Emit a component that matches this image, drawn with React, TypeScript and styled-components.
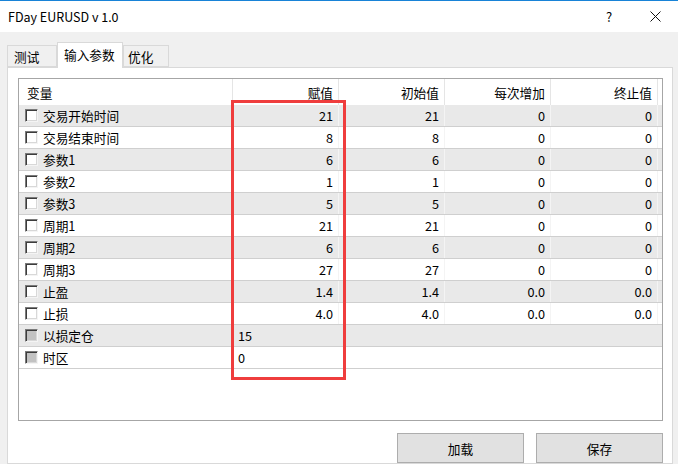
import React from "react";
import styled, { createGlobalStyle } from "styled-components";

const Global = createGlobalStyle`
  html, body { margin: 0; padding: 0; background: #f0f0f0; }
  body { font-family: "Noto Sans CJK SC", "Noto Sans", sans-serif; }
  * { box-sizing: border-box; }
`;

const Window = styled.div`
  width: 678px;
  height: 464px;
  overflow: hidden;
  background: #f0f0f0;
  display: flex;
  flex-direction: column;
  font-size: 12.7px;
  color: #000;
`;

const TitleBar = styled.div`
  height: 32px;
  flex: none;
  background: #fff;
  border-top: 1px solid #1883d7;
  display: flex;
  align-items: center;
  padding-left: 8px;
`;

const Title = styled.div`
  flex: 1;
  font-size: 12.5px;
`;

const TitleBtn = styled.div`
  width: 46px;
  height: 31px;
  display: flex;
  align-items: center;
  justify-content: center;
  font-size: 13px;
`;

const Body = styled.div`
  flex: 1;
  display: flex;
  flex-direction: column;
  padding: 10px 5px 0 7px;
`;

const TabStrip = styled.div`
  height: 25px;
  flex: none;
  display: flex;
  align-items: flex-end;
`;

const Tab = styled.div<{ $w: number; $pl: number; $active?: boolean }>`
  width: ${(p) => p.$w}px;
  height: ${(p) => (p.$active ? 26 : 22)}px;
  margin-bottom: ${(p) => (p.$active ? -1 : 0)}px;
  padding-left: ${(p) => p.$pl}px;
  padding-bottom: ${(p) => (p.$active ? 2 : 0)}px;
  background: ${(p) => (p.$active ? "#fff" : "#f0f0f0")};
  border: 1px solid #d9d9d9;
  border-bottom: ${(p) => (p.$active ? "none" : "1px solid #d9d9d9")};
  display: flex;
  align-items: center;
  position: relative;
  z-index: ${(p) => (p.$active ? 1 : 0)};
`;

const Panel = styled.div`
  flex: 1;
  background: #fff;
  border: 1px solid #d9d9d9;
  padding: 10px 9px 0 10px;
  display: flex;
  flex-direction: column;
`;

const List = styled.div`
  height: 343px;
  border: 1px solid #a6a6a6;
  background: #fff;
  position: relative;
  flex: none;
`;

const cols = "214px 106px 106px 106px 107px 1fr";

const HeaderRow = styled.div`
  display: grid;
  grid-template-columns: ${cols};
  height: 26px;
`;

const HeadCell = styled.div<{ $left?: boolean; $last?: boolean }>`
  display: flex;
  align-items: center;
  justify-content: ${(p) => (p.$left ? "flex-start" : "flex-end")};
  padding: ${(p) => (p.$left ? "0 0 0 8px" : "0 5px 0 0")};
  border-right: ${(p) => (p.$last ? "none" : "1px solid #e5e5e5")};
`;

const Row = styled.div<{ $alt: boolean }>`
  display: grid;
  grid-template-columns: ${cols};
  height: 22px;
  background: ${(p) => (p.$alt ? "#e9e9e9" : "#fff")};
  border-bottom: 1px solid #cfcfcf;
`;

const FixedRow = styled(Row)`
  grid-template-columns: 214px 1fr;
`;

const NameCell = styled.div`
  display: flex;
  align-items: center;
  padding-left: 6px;
  border-right: 1px solid #f4f4f4;
`;

const ValueCell = styled.div<{ $left?: boolean; $noline?: boolean }>`
  display: flex;
  align-items: center;
  justify-content: ${(p) => (p.$left ? "flex-start" : "flex-end")};
  padding: ${(p) => (p.$left ? "0 0 0 5px" : "0 5px 0 0")};
  border-right: ${(p) => (p.$noline ? "none" : "1px solid #f4f4f4")};
`;

const Check = styled.span<{ $disabled?: boolean }>`
  width: 13px;
  height: 13px;
  flex: none;
  border: 1px solid;
  border-color: #7a7a7a #f4f4f4 #f4f4f4 #7a7a7a;
  box-shadow: inset 1px 1px 0 #3c3c3c, inset -1px -1px 0 #d8d8d8;
  background: ${(p) => (p.$disabled ? "#c2c2c2" : "#fff")};
  margin-right: 5px;
`;

const Highlight = styled.div`
  position: absolute;
  left: 212px;
  top: 21px;
  width: 115px;
  height: 280px;
  border: 3px solid #ef3d3d;
  pointer-events: none;
`;

const ButtonRow = styled.div`
  display: flex;
  justify-content: flex-end;
  gap: 12px;
  margin-top: 12px;
`;

const Button = styled.div`
  width: 127px;
  height: 30px;
  background: #e1e1e1;
  border: 1px solid #adadad;
  display: flex;
  align-items: center;
  justify-content: center;
`;

const rows: [string, string, string, string, string][] = [
  ["交易开始时间", "21", "21", "0", "0"],
  ["交易结束时间", "8", "8", "0", "0"],
  ["参数1", "6", "6", "0", "0"],
  ["参数2", "1", "1", "0", "0"],
  ["参数3", "5", "5", "0", "0"],
  ["周期1", "21", "21", "0", "0"],
  ["周期2", "6", "6", "0", "0"],
  ["周期3", "27", "27", "0", "0"],
  ["止盈", "1.4", "1.4", "0.0", "0.0"],
  ["止损", "4.0", "4.0", "0.0", "0.0"],
];

const fixed: [string, string][] = [
  ["以损定仓", "15"],
  ["时区", "0"],
];

export default function App() {
  return (
    <>
      <Global />
      <Window>
        <TitleBar>
          <Title>FDay EURUSD v 1.0</Title>
          <TitleBtn>?</TitleBtn>
          <TitleBtn>
            <svg width="11" height="11" viewBox="0 0 11 11">
              <path d="M0.5 0.5 L10.5 10.5 M10.5 0.5 L0.5 10.5" stroke="#111" strokeWidth="1" />
            </svg>
          </TitleBtn>
        </TitleBar>
        <Body>
          <TabStrip>
            <Tab $w={50} $pl={6}>测试</Tab>
            <Tab $w={66} $pl={6} $active>输入参数</Tab>
            <Tab $w={46} $pl={4}>优化</Tab>
          </TabStrip>
          <Panel>
            <List>
              <HeaderRow>
                <HeadCell $left>变量</HeadCell>
                <HeadCell>赋值</HeadCell>
                <HeadCell>初始值</HeadCell>
                <HeadCell>每次增加</HeadCell>
                <HeadCell>终止值</HeadCell>
                <HeadCell $last />
              </HeaderRow>
              {rows.map((r, i) => (
                <Row key={r[0]} $alt={i % 2 === 0}>
                  <NameCell>
                    <Check />
                    {r[0]}
                  </NameCell>
                  <ValueCell>{r[1]}</ValueCell>
                  <ValueCell>{r[2]}</ValueCell>
                  <ValueCell>{r[3]}</ValueCell>
                  <ValueCell>{r[4]}</ValueCell>
                  <ValueCell $noline />
                </Row>
              ))}
              {fixed.map((r, i) => (
                <FixedRow key={r[0]} $alt={(rows.length + i) % 2 === 0}>
                  <NameCell>
                    <Check $disabled />
                    {r[0]}
                  </NameCell>
                  <ValueCell $left $noline>
                    {r[1]}
                  </ValueCell>
                </FixedRow>
              ))}
              <Highlight />
            </List>
            <ButtonRow>
              <Button>加载</Button>
              <Button>保存</Button>
            </ButtonRow>
          </Panel>
        </Body>
      </Window>
    </>
  );
}
